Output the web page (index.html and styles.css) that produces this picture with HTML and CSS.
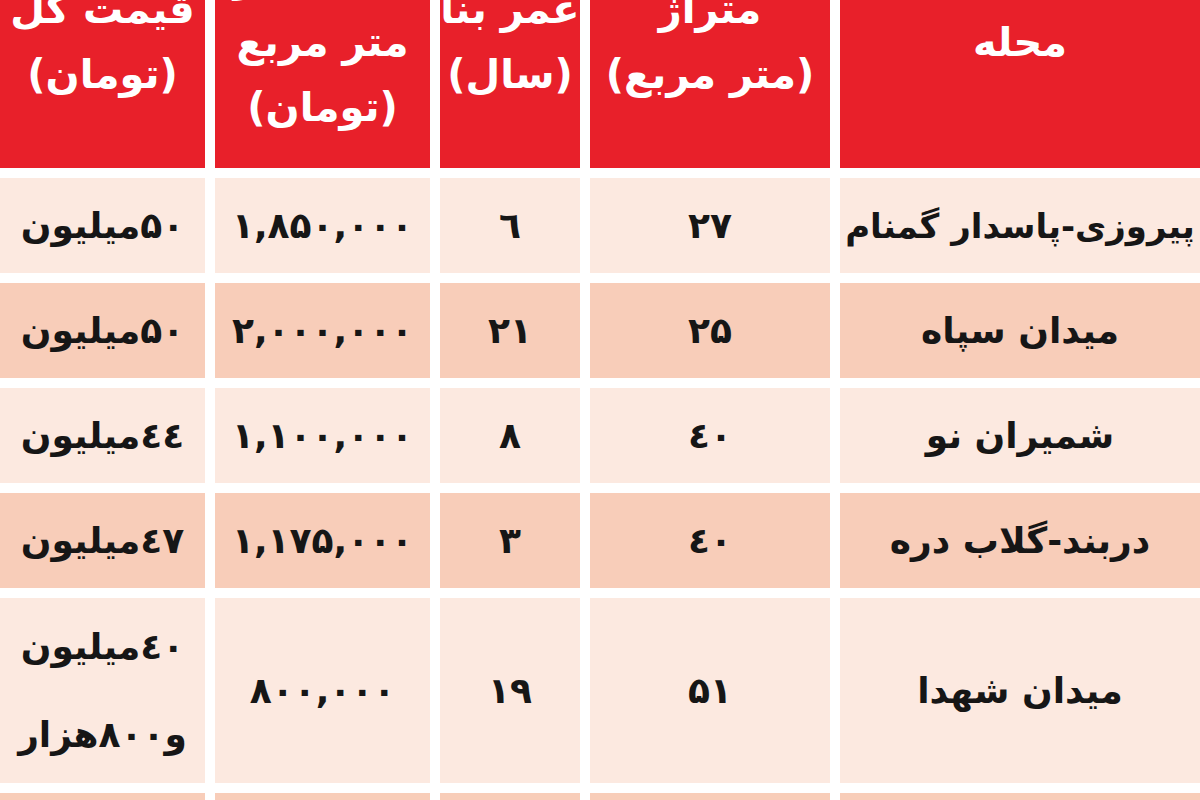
FILE: index.html
```html
<!DOCTYPE html>
<html lang="fa" dir="rtl">
<head>
<meta charset="utf-8">
<title>قیمت آپارتمان</title>
<link rel="stylesheet" href="styles.css">
</head>
<body>
<div class="table">
  <div class="cell head"><span>محله</span></div>
  <div class="cell head"><span>متراژ<br>(متر مربع)</span></div>
  <div class="cell head"><span>عمر بنا<br>(سال)</span></div>
  <div class="cell head"><span>قیمت هر<br>متر مربع<br>(تومان)</span></div>
  <div class="cell head"><span>قیمت کل<br>(تومان)</span></div>

  <div class="cell light name">پیروزی-پاسدار گمنام</div>
  <div class="cell light">۲۷</div>
  <div class="cell light">٦</div>
  <div class="cell light">۱,۸۵۰,۰۰۰</div>
  <div class="cell light">۵۰میلیون</div>

  <div class="cell dark">میدان سپاه</div>
  <div class="cell dark">۲۵</div>
  <div class="cell dark">۲۱</div>
  <div class="cell dark">۲,۰۰۰,۰۰۰</div>
  <div class="cell dark">۵۰میلیون</div>

  <div class="cell light">شمیران نو</div>
  <div class="cell light">٤۰</div>
  <div class="cell light">۸</div>
  <div class="cell light">۱,۱۰۰,۰۰۰</div>
  <div class="cell light">٤٤میلیون</div>

  <div class="cell dark">دربند-گلاب دره</div>
  <div class="cell dark">٤۰</div>
  <div class="cell dark">۳</div>
  <div class="cell dark">۱,۱۷۵,۰۰۰</div>
  <div class="cell dark">٤۷میلیون</div>

  <div class="cell light">میدان شهدا</div>
  <div class="cell light">۵۱</div>
  <div class="cell light">۱۹</div>
  <div class="cell light">۸۰۰,۰۰۰</div>
  <div class="cell light two"><span>٤۰میلیون<br>و۸۰۰هزار</span></div>

  <div class="cell dark"></div>
  <div class="cell dark"></div>
  <div class="cell dark"></div>
  <div class="cell dark"></div>
  <div class="cell dark"></div>
</div>
</body>
</html>
```

FILE: styles.css
```css
html, body {
  margin: 0;
  padding: 0;
  background: #ffffff;
  overflow: hidden;
}
body {
  width: 1200px;
  height: 800px;
  font-family: "DejaVu Sans", sans-serif;
}
.table {
  direction: rtl;
  display: grid;
  grid-template-columns: 360px 240px 140px 215px 205px;
  grid-template-rows: 252px 95px 95px 95px 95px 185px 7px;
  column-gap: 10px;
  row-gap: 10px;
  margin-top: -84px;
}
.cell {
  display: flex;
  align-items: center;
  justify-content: center;
  text-align: center;
  color: #161616;
  font-size: 36px;
  font-weight: bold;
  white-space: nowrap;
  overflow: visible;
}
.head {
  background: #e8202a;
  color: #ffffff;
  font-size: 40px;
  line-height: 65px;
}
.light {
  background: #fce9e0;
}
.dark {
  background: #f8cdb9;
}
.name {
  font-size: 34px;
}
.two {
  line-height: 88px;
}
```
